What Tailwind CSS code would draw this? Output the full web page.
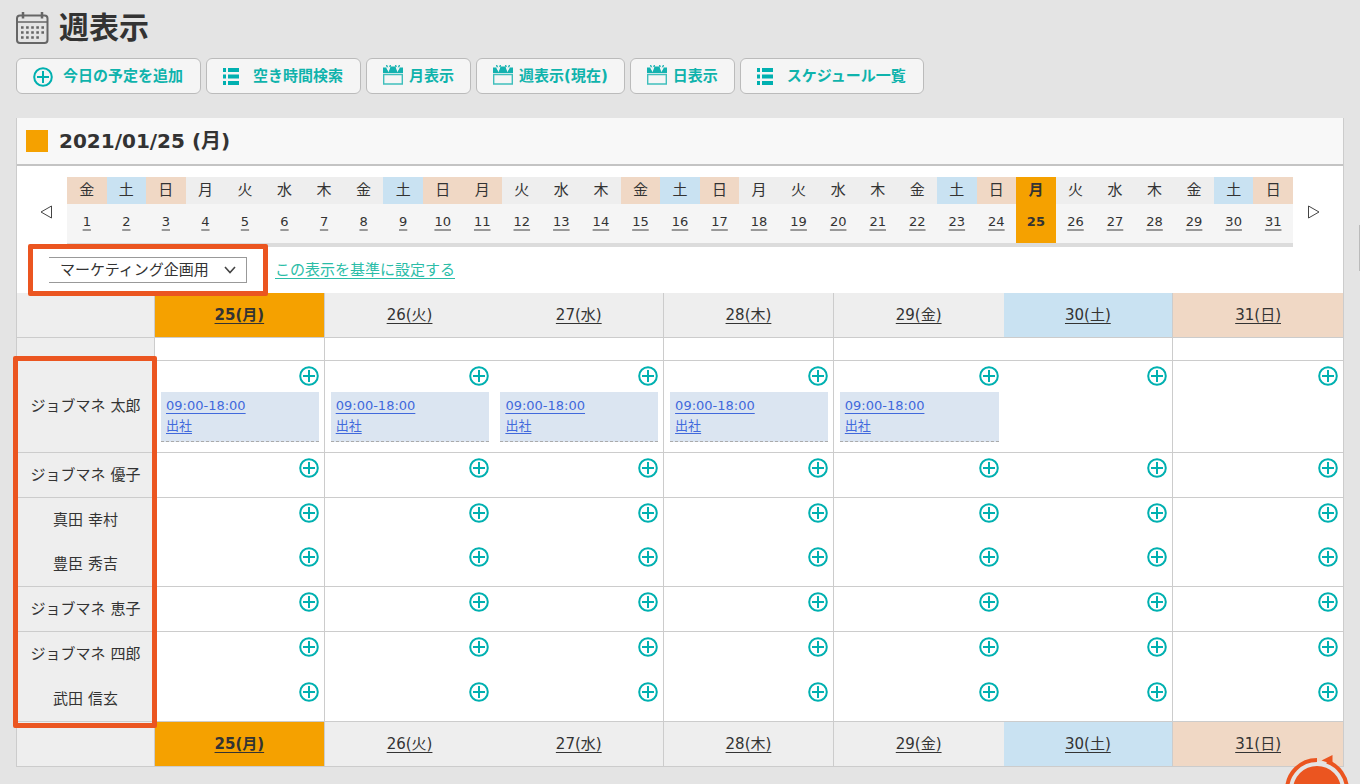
<!DOCTYPE html>
<html lang="ja">
<head>
    <meta charset="UTF-8">
    <title>週表示</title>
    <script src="https://cdn.jsdelivr.net/npm/@tailwindcss/browser@4"></script>
</head>
<body class="relative min-h-screen overflow-x-hidden bg-[#e4e4e4] px-4 pt-2 font-['DejaVu_Sans','Noto_Sans_CJK_JP',sans-serif] text-[15px] text-[#333]">
    <svg class="hidden">
        <symbol id="icon-plus" viewBox="0 0 20 20">
            <circle cx="10" cy="10" r="8.8" fill="none" stroke="#00b0b0" stroke-width="2"/>
            <path d="M10 4v12M4 10h12" stroke="#00b0b0" stroke-width="2"/>
        </symbol>
        <symbol id="icon-list" viewBox="0 0 16 17">
            <path d="M0 0h3v4H0zM5 0h11v4H5zM0 6.500h3v4H0zM5 6.500h11v4H5zM0 13h3v4H0zM5 13h11v4H5z" fill="#00b0b0"/>
        </symbol>
        <symbol id="icon-cal" viewBox="0 0 20 20">
            <path d="M0 2.500h3l2.500 4L7 1.500h6l1.500 5 2.500-4h3V8H0z" fill="#14b2b0"/>
            <path d="M3.500 0l1 2.500M7.500 0L6 4M12.500 0L14 4M16.500 0l-1 2.500" fill="none" stroke="#14b2b0" stroke-width="1.300"/>
            <path d="M4.500 2.500l1 3 1.300-3.500M13.200 2l1.300 3.500 1-3" fill="none" stroke="#f5f5f5" stroke-width="1.200"/>
            <path d="M.7 9.500h18.600v9.500H.7z" fill="none" stroke="#3fbfbc" stroke-width="1.400"/>
        </symbol>
    </svg>

    <header class="flex h-10 items-center gap-[10px]">
        <svg class="size-[33px]" viewBox="0 0 33 33" fill="none" stroke="#666">
            <rect x="1" y="3.500" width="30.500" height="27.500" rx="3" stroke-width="2"/>
            <path d="M1 10h30" stroke-width="1.500"/>
            <path d="M7 0v6.500M26 0v6.500" stroke-width="2.500"/>
            <path d="M5 15.500h24M5 20.500h24M5 25.500h19" stroke-width="2.600" stroke-dasharray="2.600 2.500"/>
        </svg>
        <h1 class="text-[30px] leading-10 font-bold">週表示</h1>
    </header>

    <nav class="mt-[10px] flex gap-[5px] font-bold text-[#0fb3ac]">
        <button class="flex h-9 items-center gap-[10px] rounded-md border border-[#bbb] bg-[#f5f5f5] pr-[17px] pl-4"><svg class="mt-[2px] size-5"><use href="#icon-plus"/></svg>今日の予定を追加</button>
        <button class="flex h-9 items-center gap-[14px] rounded-md border border-[#bbb] bg-[#f5f5f5] pr-[17px] pl-4"><svg class="h-[17px] w-4"><use href="#icon-list"/></svg>空き時間検索</button>
        <button class="flex h-9 items-center gap-[6px] rounded-md border border-[#bbb] bg-[#f5f5f5] px-4"><svg class="mb-[2px] size-5"><use href="#icon-cal"/></svg>月表示</button>
        <button class="flex h-9 items-center gap-[6px] rounded-md border border-[#bbb] bg-[#f5f5f5] px-4"><svg class="mb-[2px] size-5"><use href="#icon-cal"/></svg>週表示(現在)</button>
        <button class="flex h-9 items-center gap-[6px] rounded-md border border-[#bbb] bg-[#f5f5f5] px-4"><svg class="mb-[2px] size-5"><use href="#icon-cal"/></svg>日表示</button>
        <button class="flex h-9 items-center gap-[14px] rounded-md border border-[#bbb] bg-[#f5f5f5] pr-[17px] pl-4"><svg class="h-[17px] w-4"><use href="#icon-list"/></svg>スケジュール一覧</button>
    </nav>

    <main class="mt-6 border-x border-[#ccc] bg-white">
        <div class="flex h-12 items-center gap-[11px] border-b-2 border-[#c4c4c4] bg-[#f8f8f8] pl-[9px]">
            <span class="size-[22px] bg-[#f5a100]"></span>
            <h2 class="text-[20px] leading-6 font-bold">2021/01/25 (月)</h2>
        </div>

        <div class="flex items-center pt-[11px]">
            <button class="flex w-[50px] justify-center pl-2" aria-label="前月">
                <svg class="h-[14px] w-3" viewBox="0 0 12 14"><path d="M11.500 1v12L1 7z" fill="none" stroke="#444"/></svg>
            </button>
            <table class="w-0 flex-1 table-fixed border-separate border-spacing-0 border-b-4 border-[#dcdcdc] text-center">
                <thead><tr id="month-week" class="h-[27px]"></tr></thead>
                <tbody><tr id="month-days" class="h-[39px] bg-[#f5f5f5] text-[13px]"></tr></tbody>
            </table>
            <button class="flex w-[50px] justify-center pr-2" aria-label="翌月">
                <svg class="h-[14px] w-3" viewBox="0 0 12 14"><path d="M.5 1v12L11 7z" fill="none" stroke="#444"/></svg>
            </button>
        </div>

        <div class="flex h-[46px] items-center gap-7 pl-8">
            <div class="relative z-10 w-[198px]">
                <select aria-label="グループ" class="block h-[26px] w-full appearance-none border border-l-0 border-[#999] bg-white pl-[11px] text-[15px] leading-5">
                    <option>マーケティング企画用</option>
                </select>
                <svg class="pointer-events-none absolute top-[9px] right-[11px] h-2 w-3" viewBox="0 0 12 8"><path d="M1 1l5 5.500L11 1" fill="none" stroke="#444" stroke-width="1.600"/></svg>
                <div class="pointer-events-none absolute -inset-x-[21px] -inset-y-[13px] rounded-xs border-5 border-[#eb5520]"></div>
            </div>
            <a href="#" class="text-[#2bbda8] underline underline-offset-3">この表示を基準に設定する</a>
        </div>

        <div class="relative">
            <table class="w-full table-fixed border-separate border-spacing-0 text-center">
                <thead><tr id="week-head" class="h-[45px]"></tr></thead>
                <tbody id="week-body"></tbody>
                <tfoot><tr id="week-foot" class="h-[45px]"></tr></tfoot>
            </table>
            <div class="pointer-events-none absolute top-[63px] -left-1 h-[372px] w-36 rounded-xs border-5 border-[#eb5520]"></div>
        </div>
    </main>

    <div class="fixed top-[225px] right-0 h-[46px] w-px bg-[#bbb]"></div>
    <button class="fixed right-[10px] bottom-0" aria-label="メニュー">
        <svg class="h-[30px] w-[66px]" viewBox="0 0 66 30">
            <circle cx="33" cy="36" r="29" fill="#e4e4e4"/>
            <circle cx="33" cy="36" r="24" fill="#eb5520"/>
            <path d="M3 36A30 30 0 0 1 33 6M43 7.700A30 30 0 0 1 63 36" fill="none" stroke="#eb5520" stroke-width="4"/>
            <path d="M37.500 6.500L48.500 1v9z" fill="#eb5520"/>
        </svg>
    </button>

    <script>
        const names = ["日", "月", "火", "水", "木", "金", "土"];
        const holidays = [1, 11, 15];
        const today = 25;

        function headColor(day) {
            const w = (day + 4) % 7;
            if (day === today) return "bg-[#f5a100] font-bold";
            if (w === 0 || holidays.includes(day)) return "bg-[#f0d8c5]";
            if (w === 6) return "bg-[#c9e2f2]";
            return "bg-[#eee]";
        }

        // month strip
        let weekRow = "", dayRow = "";
        for (let d = 1; d <= 31; d++) {
            weekRow += `<th scope="col" class="p-0 ${d === today ? "" : "font-normal"} ${headColor(d)}">${names[(d + 4) % 7]}</th>`;
            dayRow += d === today
                ? `<td class="bg-[#f5a100] p-0 pb-1 font-bold">${d}</td>`
                : `<td class="p-0 pb-1"><a href="#" class="underline decoration-[#999] decoration-2 underline-offset-3">${d}</a></td>`;
        }
        document.getElementById("month-week").innerHTML = weekRow;
        document.getElementById("month-days").innerHTML = dayRow;

        // week table: 26 and 29 have no line on their right
        const days = [25, 26, 27, 28, 29, 30, 31];
        const line = d => [26, 29, 31].includes(d) ? "" : "border-r";

        let head = `<th class="w-[138px] border-r border-b border-[#ccc] bg-[#eee]"></th>`;
        days.forEach(d => {
            head += `<th scope="col" class="border-b border-[#ccc] p-0 ${line(d)} ${d === today ? "" : "font-normal"} ${headColor(d)}"><a href="#" class="underline underline-offset-3">${d}(${names[(d + 4) % 7]})</a></th>`;
        });
        document.getElementById("week-head").innerHTML = head;
        document.getElementById("week-foot").innerHTML = head;

        const event = `<div class="mt-[6px] mr-[5px] ml-[6px] h-[50px] border-b border-dashed border-[#aaa] bg-[#dbe5f1] pt-1 pl-[5px] text-left text-[13px] leading-5">
            <a href="#" class="block text-[#4169dc] underline underline-offset-3">09:00-18:00<br>出社</a></div>`;

        const members = [
            { name: "", height: "h-[23px]", border: "border-b" },
            { name: "ジョブマネ 太郎", height: "h-[92px]", border: "border-b", events: true },
            { name: "ジョブマネ 優子", height: "h-[45px]", border: "border-b" },
            { name: "真田 幸村", height: "h-[44px]", border: "" },
            { name: "豊臣 秀吉", height: "h-[45px]", border: "border-b" },
            { name: "ジョブマネ 恵子", height: "h-[45px]", border: "border-b" },
            { name: "ジョブマネ 四郎", height: "h-[45px]", border: "" },
            { name: "武田 信玄", height: "h-[45px]", border: "border-b" }
        ];
        document.getElementById("week-body").innerHTML = members.map(m => {
            const cells = days.map(d => `<td class="border-[#ccc] p-0 align-top ${m.border} ${line(d)}">${m.name
                ? `<button class="mt-[5px] mr-[5px] ml-auto block size-5" aria-label="予定を追加"><svg class="size-5"><use href="#icon-plus"/></svg></button>`
                : ""}${m.events && d < 30 ? event : ""}</td>`).join("");
            return `<tr class="${m.height}"><th scope="row" class="border-r border-[#ccc] bg-[#eee] p-0 font-normal ${m.border}">${m.name}</th>${cells}</tr>`;
        }).join("");
    </script>
</body>
</html>
